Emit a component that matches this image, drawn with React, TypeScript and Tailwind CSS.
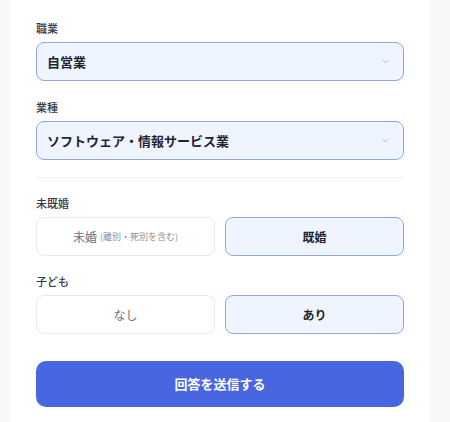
import { ChevronDown } from "lucide-react";

const font = { fontFamily: '"Noto Sans CJK JP", "Noto Sans", sans-serif' };

function Label({ children }: { children: React.ReactNode }) {
  return (
    <div className="text-[11px] leading-4 font-medium text-[#333a45] mb-[6px]">
      {children}
    </div>
  );
}

function Select({ value }: { value: string }) {
  return (
    <div className="h-[39px] rounded-lg border border-[#8ea9e0] bg-[#eff5ff] flex items-center justify-between pl-[10px] pr-[12px]">
      <span className="text-[13px] font-bold text-[#1e2530]">{value}</span>
      <ChevronDown size={11} strokeWidth={1.5} className="text-[#9aa1ac]" />
    </div>
  );
}

function Choice({
  active,
  children,
}: {
  active?: boolean;
  children: React.ReactNode;
}) {
  return (
    <div
      className={`h-[39px] rounded-lg border flex items-center justify-center text-[12px] ${
        active
          ? "border-[#8ea9e0] bg-[#eff5ff] font-bold text-[#1e2530]"
          : "border-[#e6e9ee] bg-white text-[#6b717b]"
      }`}
    >
      {children}
    </div>
  );
}

export default function App() {
  return (
    <div className="w-[450px] h-[422px] bg-[#f7f8fa] overflow-hidden" style={font}>
      <div className="ml-[10px] w-[420px] h-full bg-white px-[26px] pt-5">
        {/* 職業 */}
        <Label>職業</Label>
        <Select value="自営業" />

        <div className="mt-[18px]">
          <Label>業種</Label>
          <Select value="ソフトウェア・情報サービス業" />
        </div>

        <div className="mt-[17px] h-px bg-[#eef0f3]" />

        {/* 未既婚 */}
        <div className="mt-[17px]">
          <Label>未既婚</Label>
          <div className="grid grid-cols-2 gap-[10px]">
            <Choice>
              未婚
              <span className="ml-[3px] text-[9px] text-[#8a9099]">(離別・死別を含む)</span>
            </Choice>
            <Choice active>既婚</Choice>
          </div>
        </div>

        {/* 子ども */}
        <div className="mt-[17px]">
          <Label>子ども</Label>
          <div className="grid grid-cols-2 gap-[10px]">
            <Choice>なし</Choice>
            <Choice active>あり</Choice>
          </div>
        </div>

        <button className="mt-[27px] w-full h-[46px] rounded-[10px] bg-[#4766e0] text-white text-[13px] font-bold">
          回答を送信する
        </button>
      </div>
    </div>
  );
}
